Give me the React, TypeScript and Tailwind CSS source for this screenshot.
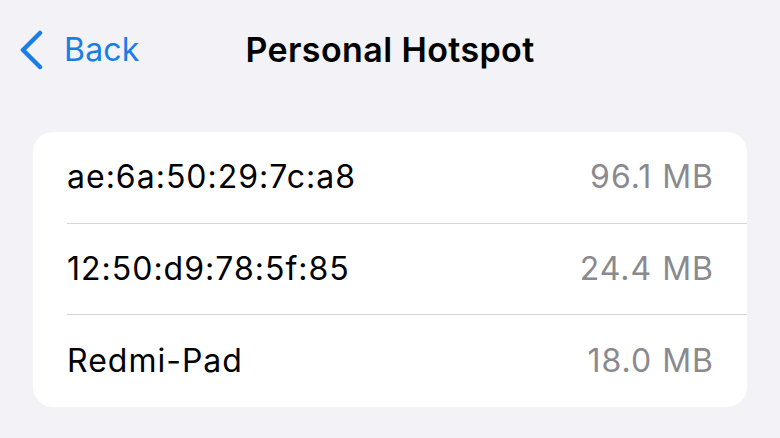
const rows = [
  { name: "ae:6a:50:29:7c:a8", usage: "96.1 MB" },
  { name: "12:50:d9:78:5f:85", usage: "24.4 MB" },
  { name: "Redmi-Pad", usage: "18.0 MB" },
];

export default function App() {
  return (
    <div
      className="w-[780px] h-[438px] bg-[#f2f2f7] overflow-hidden"
      style={{ fontFamily: "Inter, 'Noto Sans', sans-serif" }}
    >
      {/* Nav bar */}
      <div className="relative h-[100px] flex items-center">
        <div className="flex items-center pl-[19px] gap-[21px] text-[#1a7ce6]">
          <svg width="24" height="40" viewBox="0 0 24 40" fill="none">
            <path
              d="M21 3 L4 20 L21 37"
              stroke="currentColor"
              strokeWidth="4.5"
              strokeLinecap="round"
              strokeLinejoin="round"
            />
          </svg>
          <span className="text-[32px] leading-none tracking-[0.2px]">Back</span>
        </div>
        <div className="absolute inset-x-0 top-0 h-[100px] flex items-center justify-center pointer-events-none">
          <span className="text-[34px] font-semibold leading-none text-black tracking-[0.4px]">
            Personal Hotspot
          </span>
        </div>
      </div>

      {/* List */}
      <div className="mx-[33px] mt-[32px] bg-white rounded-[20px] overflow-hidden">
        {rows.map((r, i) => (
          <div key={r.name} className="ml-[34px]">
            <div
              className={`h-[91.5px] flex items-center justify-between pr-[33px] ${
                i < rows.length - 1 ? "border-b border-[#d6d6da]" : ""
              }`}
            >
              <span className="text-[32px] text-black leading-none tracking-[1px]">
                {r.name}
              </span>
              <span className="text-[32px] text-[#8a8a8e] leading-none tracking-[1px]">
                {r.usage}
              </span>
            </div>
          </div>
        ))}
      </div>
    </div>
  );
}
